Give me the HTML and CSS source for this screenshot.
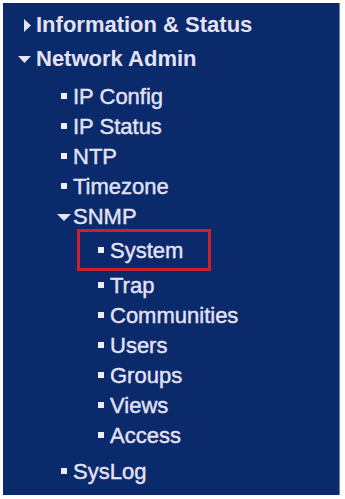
FILE: index.html
```html
<!DOCTYPE html>
<html>
<head>
<meta charset="utf-8">
<link rel="stylesheet" href="styles.css">
</head>
<body>
<nav class="panel">
  <ul class="menu">
    <li class="hdr">
      <div class="hrow"><span class="ico"><svg width="7" height="13" viewBox="0 0 7 13"><polygon points="0,0 7,6.5 0,13" fill="#e6e4f4"/></svg></span>Information &amp; Status</div>
    </li>
    <li class="hdr open">
      <div class="hrow"><span class="ico"><svg width="13" height="7" viewBox="0 0 13 7"><polygon points="0,0 13,0 6.5,7" fill="#e6e4f4"/></svg></span>Network Admin</div>
      <ul class="sub">
        <li class="row"><span class="bullet"></span>IP Config</li>
        <li class="row"><span class="bullet"></span>IP Status</li>
        <li class="row"><span class="bullet"></span>NTP</li>
        <li class="row"><span class="bullet"></span>Timezone</li>
        <li class="folder">
          <div class="frow"><svg class="fico" width="14" height="7" viewBox="0 0 14 7"><polygon points="0,0 14,0 7,7" fill="#e6e4f4"/></svg>SNMP</div>
          <ul class="sub2">
            <li class="row2 selected"><span class="bullet"></span>System</li>
            <li class="row2"><span class="bullet"></span>Trap</li>
            <li class="row2"><span class="bullet"></span>Communities</li>
            <li class="row2"><span class="bullet"></span>Users</li>
            <li class="row2"><span class="bullet"></span>Groups</li>
            <li class="row2"><span class="bullet"></span>Views</li>
            <li class="row2"><span class="bullet"></span>Access</li>
          </ul>
        </li>
        <li class="row last"><span class="bullet"></span>SysLog</li>
      </ul>
    </li>
  </ul>
</nav>
</body>
</html>
```
FILE: styles.css
```css
html, body {
  margin: 0;
  padding: 0;
  background: #ffffff;
}
body {
  width: 345px;
  height: 499px;
  overflow: hidden;
  font-family: "Liberation Sans", Arial, sans-serif;
  color: #e4e2f4;
}
.panel {
  margin: 3px 0 0 3px;
  width: 337px;
  height: 492px;
  box-sizing: border-box;
  background: #0a2a6b;
  border-right: 1px solid #6f7fa6;
  padding-top: 7px;
}
ul {
  list-style: none;
  margin: 0;
  padding: 0;
}
.hdr + .hdr {
  margin-top: 4px;
}
.hrow {
  display: flex;
  align-items: center;
  height: 30px;
  line-height: 30px;
  font-size: 22px;
  font-weight: bold;
  padding-left: 13px;
  white-space: nowrap;
}
.ico {
  width: 20px;
  display: flex;
  justify-content: flex-end;
  padding-right: 5px;
  box-sizing: border-box;
  align-items: center;
}
.ico svg {
  display: block;
}
.sub {
  margin-top: 8px;
  padding-left: 58px;
}
.row, .frow, .row2 {
  display: flex;
  align-items: center;
  height: 30px;
  line-height: 30px;
  font-size: 22px;
  white-space: nowrap;
  -webkit-text-stroke: 0.4px #e4e2f4;
}
.bullet {
  width: 6px;
  height: 6px;
  background: #eeeef8;
  margin-right: 6px;
  margin-top: -2px;
  flex: none;
}
.frow {
  margin-left: -4px;
}
.fico {
  display: block;
  margin-right: 2px;
}
.sub2 {
  margin-top: -3px;
  padding-left: 16px;
}
.row2 {
  padding-left: 21px;
}
.row2.selected {
  height: 42px;
  width: 134px;
  box-sizing: border-box;
  border: 3px solid #cf1f2d;
  padding-left: 18px;
  padding-top: 2px;
}
.last {
  margin-top: 6px;
}
```
